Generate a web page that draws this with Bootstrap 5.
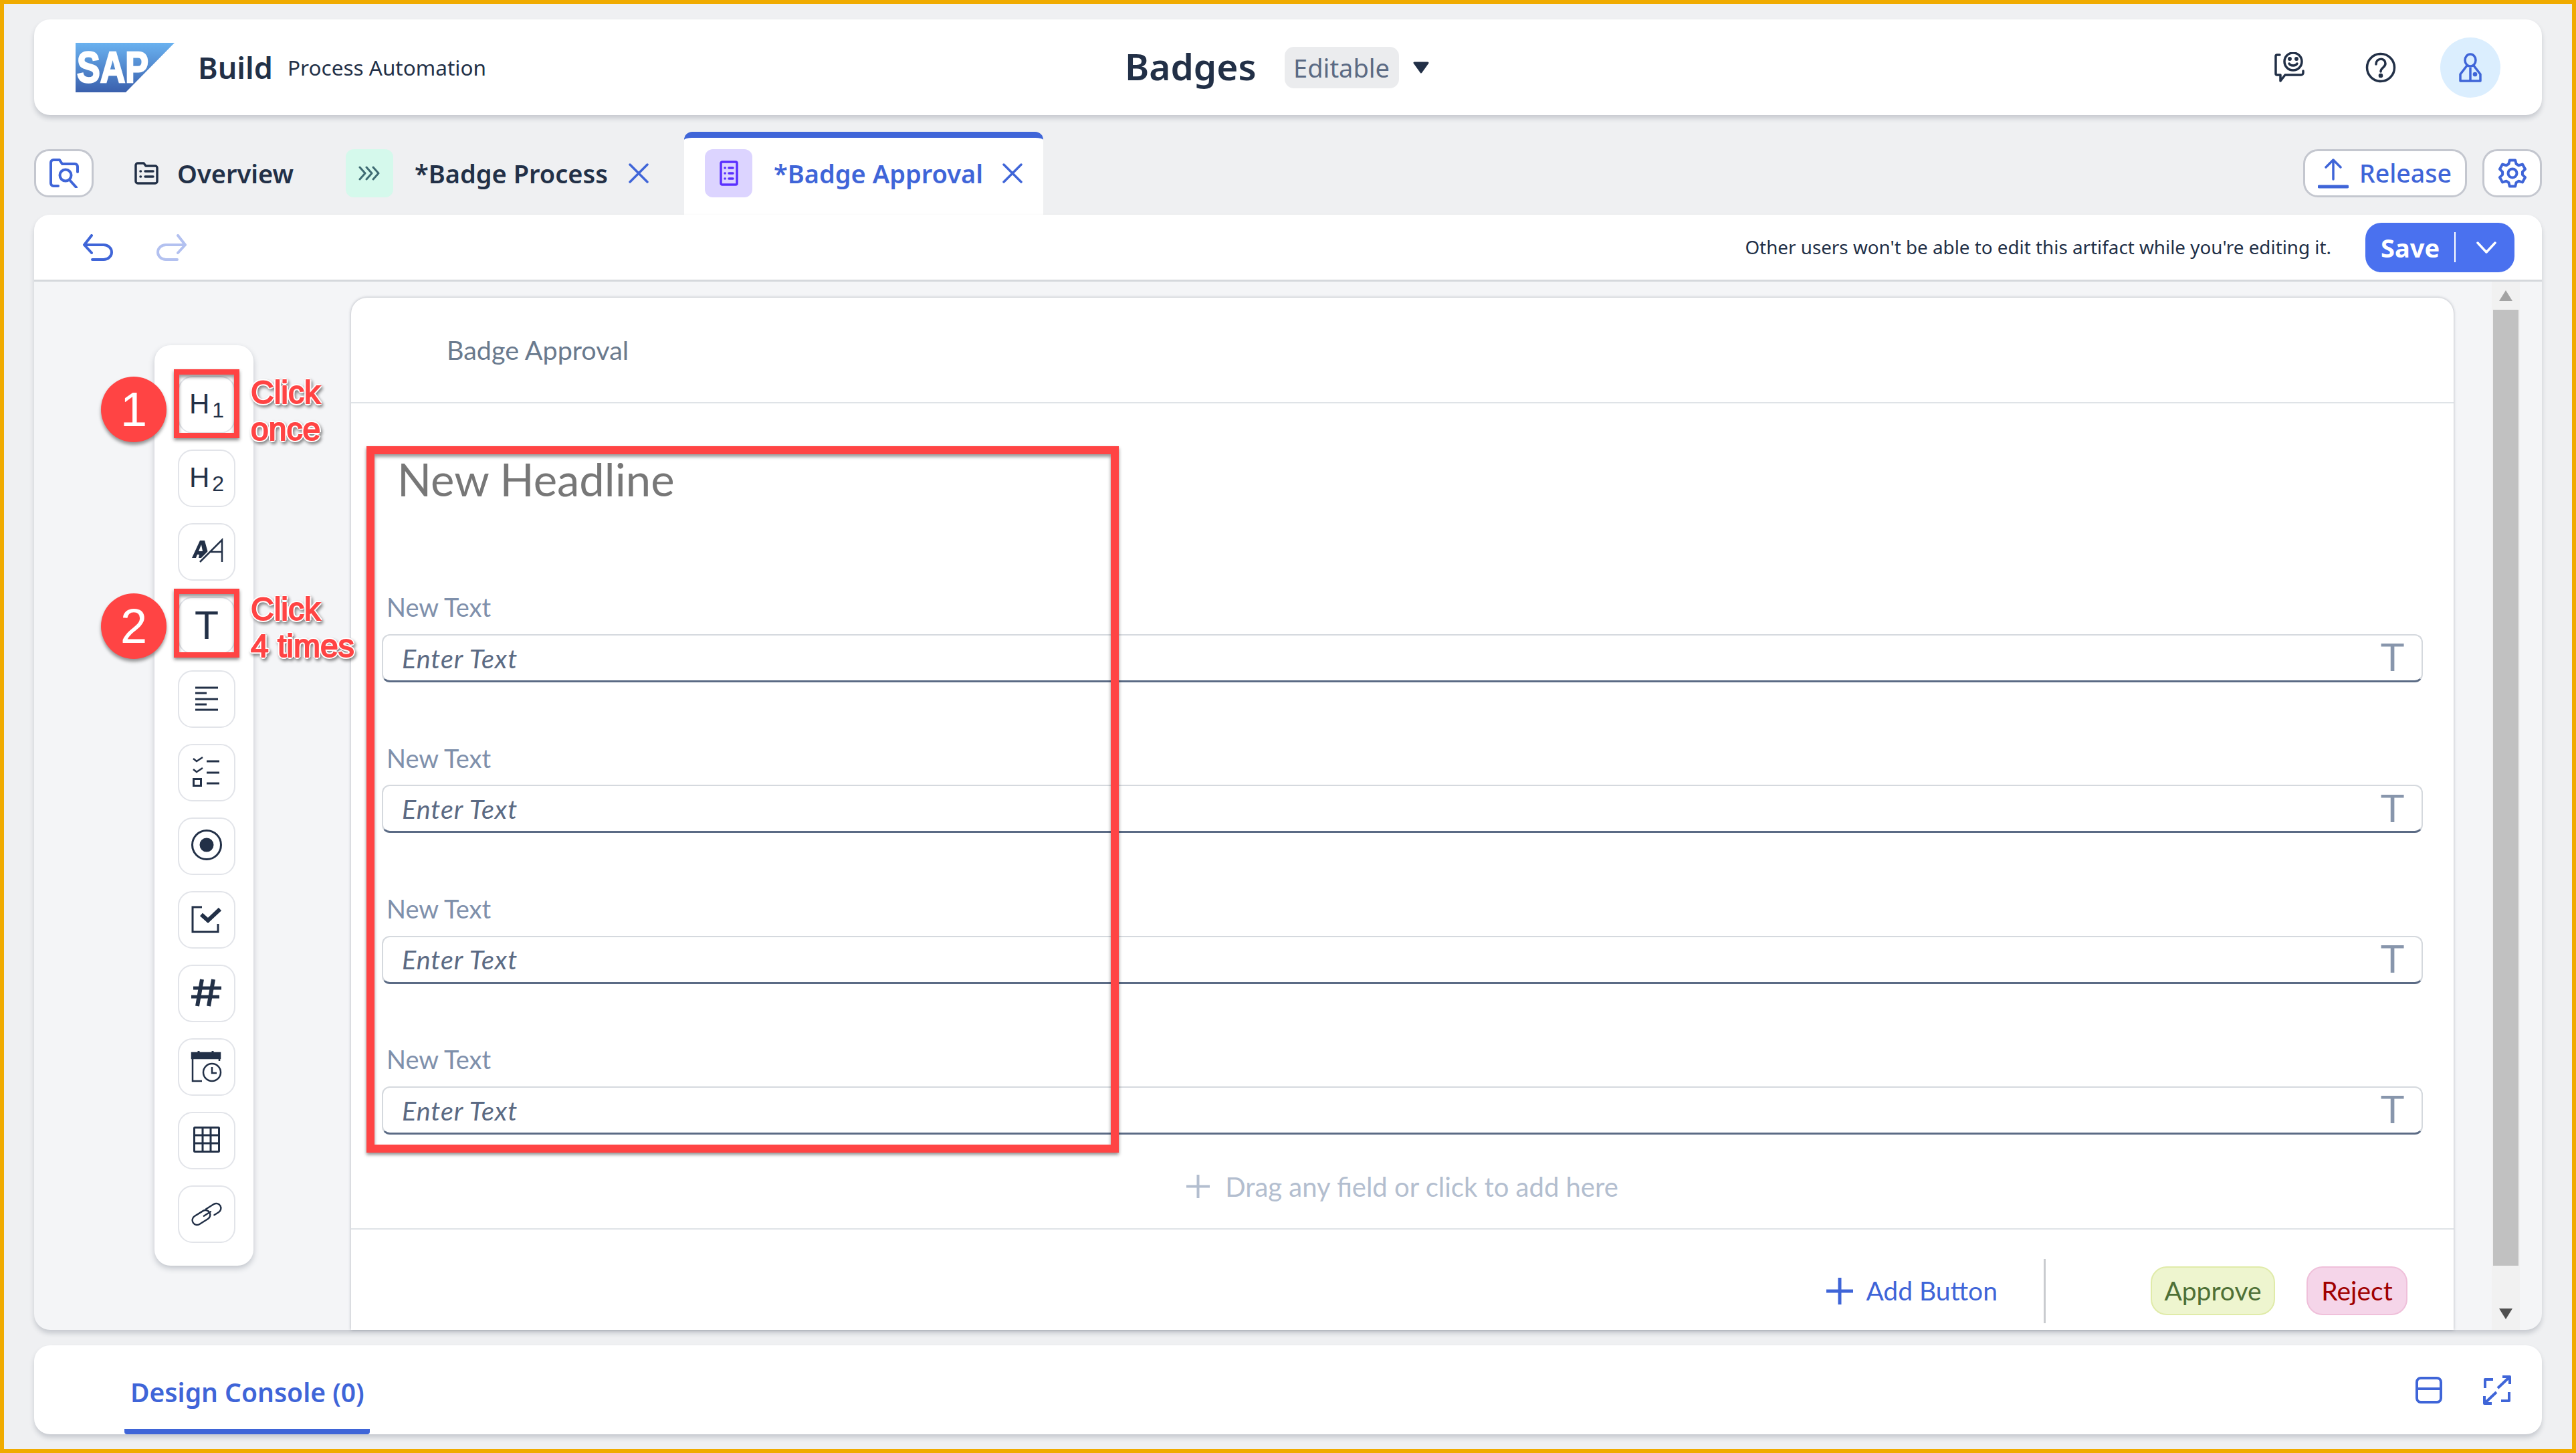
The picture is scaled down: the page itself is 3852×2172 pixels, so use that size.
<!DOCTYPE html>
<html lang="en">
<head>
  <meta charset="UTF-8" />
  <title>Badges - Process Automation</title>
  <link href="https://cdn.jsdelivr.net/npm/bootstrap@5.3.3/dist/css/bootstrap.min.css" rel="stylesheet" />
  <style>
    html, body { margin: 0; height: 100%; overflow: hidden; }
    body { font-family: "Noto Sans", sans-serif; color: #223047; background: #eff0f2; }
    svg { display: block; flex: none; }
    .app-frame { position: relative; width: 3852px; height: 2172px; border: 6px solid #f0ab00; background: #eff0f2; padding: 23px 45px 0; }

    /* header */
    .top-bar { height: 143px; background: #fff; border-radius: 24px; box-shadow: 0 5px 7px rgba(40,50,70,.2); flex: none; }
    .brand-zone { width: 1631px; padding-left: 62px; }
    .brand-build { font-size: 45px; font-weight: 600; margin-left: 35px; line-height: 1; }
    .brand-sub { font-size: 31.500px; margin-left: 22px; line-height: 1; }
    .page-title { font-size: 55px; font-weight: 600; line-height: 1; margin-top: -4px; }
    .state-chip { background: #ebecee; color: #5b6a83; font-size: 38px; line-height: 1; border-radius: 14px; height: 62px; width: 171px; margin-left: 42px; }
    .state-caret { margin-left: 21px; }
    .head-icons { margin-left: auto; padding-right: 62px; }
    .help-icon { margin-left: 90px; }
    .avatar-dot { width: 90px; height: 90px; border-radius: 50%; background: #dbeefe; margin-left: 66px; }

    /* tabs */
    .tab-row { height: 124px; margin-top: 25px; flex: none; }
    .tool-btn { height: 72px; background: #fff; border: 3px solid #c4c7cf; border-radius: 22px; color: #3f65d8; margin-top: 26px; }
    .finder-btn { width: 89px; }
    .doc-tab { height: 124px; padding-top: 26px; font-size: 38px; font-weight: 600; }
    .doc-tab-inner { height: 72px; }
    .tab-overview { margin-left: 61px; width: 316px; }
    .tab-overview .tab-label { margin-left: 28px; }
    .tab-process { width: 506px; }
    .tab-approval { width: 537px; padding-left: 31px; background: #fff; border-top: 9px solid #3f65d8; border-radius: 12px 12px 0 0; padding-top: 17px; color: #3f65d8; }
    .tab-chip { width: 71px; height: 72px; border-radius: 12px; }
    .chip-teal { background: #d5f9ec; }
    .chip-violet { background: #dcd4ff; }
    .tab-label { margin-left: 32px; line-height: 1; white-space: nowrap; }
    .tab-close { margin-left: auto; }
    .tab-process .tab-close { margin-right: 53px; }
    .tab-approval .tab-close { margin-right: 31px; }
    .release-btn { width: 245px; margin-left: auto; font-size: 37.500px; font-weight: 500; }
    .release-icon { margin-left: 19px; }
    .release-text { margin-left: 16px; line-height: 1; }
    .gear-btn { width: 89px; margin-left: 23px; }

    /* work panel */
    .work-panel { height: 1667px; border-radius: 24px; background: #f4f5f7; box-shadow: 0 5px 7px rgba(40,50,70,.2); flex: none; }
    .tool-strip { height: 100px; background: #fff; border-bottom: 3px solid #d5d8dc; border-radius: 24px 24px 0 0; padding: 0 41px 0 73px; flex: none; }
    .redo-icon { margin-left: 63px; }
    .lock-note { margin-left: auto; font-size: 27.800px; line-height: 1; }
    .save-btn { width: 223px; height: 74px; border-radius: 24px; background: #4a71ef; color: #fff; font-size: 38px; font-weight: 700; margin-left: 51px; padding-left: 23px; }
    .save-sep { width: 2px; height: 45px; background: #fff; margin-left: 22px; }
    .save-chev { margin-left: 31px; }
    .work-body { flex: 1; min-height: 0; }

    .field-palette { width: 148px; height: 1376px; margin: 95px 0 0 180px; background: #fff; border-radius: 24px; box-shadow: 0 4px 8px rgba(40,50,70,.25); padding: 46px 0 0 35px; flex: none; gap: 24px; }
    .palette-btn { width: 86px; height: 86px; border: 2.5px solid #e2e4e9; border-radius: 22px; background: #fff; color: #223047; font-family: "Liberation Sans", sans-serif; line-height: 1; flex: none; }
    .palette-btn svg { margin: -2.5px; }
    .glyph-h { font-size: 42px; margin-top: -3px; }
    .glyph-h sub { font-size: 32px; bottom: -.2em; margin-left: 4px; }
    .glyph-t { font-size: 59px; }

    .form-sheet { width: 3144px; margin: 24px 0 0 146px; background: #fff; border-radius: 24px 24px 0 0; box-shadow: 0 0 4px rgba(40,50,70,.35); flex: none; font-family: Lato, sans-serif; }
    .sheet-title { height: 158px; padding-left: 143px; font-size: 39.500px; color: #6a7a8e; border-bottom: 2.5px solid #dfe3e7; flex: none; }
    .sheet-fields { padding: 74.500px 46px 0 46px; flex: none; }
    .new-headline { font-size: 67px; line-height: 76px; color: #777; margin-left: 23px; margin-bottom: 131.800px; }
    .entry-field { margin-bottom: 90.600px; }
    .entry-field:last-child { margin-bottom: 0; }
    .entry-label { font-size: 38px; line-height: 44px; color: #7f90ab; margin: 0 0 18.700px 7px; }
    .entry-box { height: 72px; border: 2.5px solid #d5d9de; border-bottom: 3.5px solid #5b6b85; border-radius: 12px; padding: 0 25px 0 28px; }
    .entry-hint { font-size: 39.500px; letter-spacing: 1px; font-style: italic; color: #5b6a83; line-height: 1; }
    .entry-type { margin-left: auto; font-family: "Liberation Sans", sans-serif; font-size: 60px; line-height: 1; color: #8896ac; }
    .drop-hint { height: 140px; padding-top: 16px; font-size: 40px; color: #b3becf; flex: none; }
    .drop-hint svg { margin-right: 23px; }
    .sheet-actions { flex: 1; min-height: 0; border-top: 2.5px solid #dfe3e7; padding: 34px 69px 0 0; font-size: 39px; }
    .add-action { color: #3f65d8; line-height: 1; }
    .add-action svg { margin-right: 19px; }
    .action-sep { width: 3px; height: 96px; background: #c9cbcf; margin: 0 157px 0 69px; }
    .outcome-chip { height: 73px; border-radius: 24px; line-height: 1; }
    .chip-approve { width: 186px; background: #eef5cf; border: 2.5px solid #e0eba9; color: #4e7036; }
    .chip-reject { width: 151px; background: #f5d5e9; border: 2.5px solid #efc0da; color: #a00000; margin-left: 47px; }

    .scroll-rail { width: 42px; margin: 0 0 0 57px; background: #f1f1f1; flex: none; padding: 0 2px; }
    .scroll-up { height: 42px; }
    .scroll-thumb { flex: 1; background: #c1c1c1; }
    .scroll-down { height: 96px; }

    /* console */
    .console-bar { height: 133px; margin-top: 23px; background: #fff; border-radius: 24px; box-shadow: 0 5px 7px rgba(40,50,70,.2); padding-right: 44px; flex: none; }
    .console-tab { position: relative; height: 133px; margin-left: 135px; width: 367px; font-size: 39px; font-weight: 600; color: #3f65d8; padding: 50px 0 0 9px; line-height: 1; border-bottom: 8px solid #3f65d8; border-radius: 0 0 4px 4px; white-space: nowrap; }
    .console-icons { margin-left: auto; gap: 59px; }

    /* tutorial marks on top of the screenshot */
    .mark-box { position: absolute; border: 12px solid #ff4444; box-shadow: 0 3px 5px rgba(0,0,0,.45), inset 0 4px 5px rgba(0,0,0,.4); pointer-events: none; }
    .mark-box.tight { left: 254px; width: 98px; height: 103px; border-width: 8px; }
    .mark-wide { left: 542px; top: 661px; width: 1125px; height: 1056px; }
    .mark-step { position: absolute; left: 145px; width: 98px; height: 98px; border-radius: 50%; background: #ff4444; color: #fff; font-family: "Liberation Sans", sans-serif; font-size: 72px; line-height: 1; box-shadow: 0 4px 5px rgba(0,0,0,.4); }
    .mark-note { position: absolute; left: 369px; font-family: "Liberation Sans", sans-serif; font-size: 48px; line-height: 55px; color: #ff4444; -webkit-text-stroke: 2px #ff4444; text-shadow: -3px 0 0 #fff, 3px 0 0 #fff, 0 -3px 0 #fff, 0 3px 0 #fff, -2px -2px 0 #fff, 2px -2px 0 #fff, -2px 2px 0 #fff, 2px 2px 0 #fff; filter: drop-shadow(2px 3px 2px rgba(0,0,0,.45)); white-space: nowrap; }
  </style>
</head>
<body>
  <div class="app-frame d-flex flex-column">

    <!-- header -->
    <header class="top-bar d-flex align-items-center">
      <div class="brand-zone d-flex align-items-center">
        <svg width="148" height="74" viewBox="0 0 148 74">
          <defs><linearGradient id="sapFill" x1="0" y1="0" x2="0" y2="1"><stop offset="0" stop-color="#6ab2f0" /><stop offset="1" stop-color="#3a60ad" /></linearGradient></defs>
          <polygon points="0,0 148,0 75,74 0,74" fill="url(#sapFill)" />
          <text x="2" y="59" font-family="Liberation Sans" font-weight="700" font-size="64" fill="#fff" stroke="#fff" stroke-width="2.500" textLength="107" lengthAdjust="spacingAndGlyphs">SAP</text>
        </svg>
        <span class="brand-build">Build</span>
        <span class="brand-sub">Process Automation</span>
      </div>
      <div class="d-flex align-items-center">
        <span class="page-title">Badges</span>
        <span class="state-chip d-flex align-items-center justify-content-center">Editable</span>
        <svg class="state-caret" width="24" height="18" viewBox="0 0 24 18"><path d="M2 2h20L12 16z" fill="#223047" stroke="#223047" stroke-width="3" stroke-linejoin="round" /></svg>
      </div>
      <div class="head-icons d-flex align-items-center">
        <svg width="46" height="46" viewBox="0 0 46 46" fill="none" stroke="#223047" stroke-width="3.500" stroke-linecap="round" stroke-linejoin="round">
          <path d="M8 4H4a2 2 0 0 0-2 2v26a2 2 0 0 0 2 2h5v9l7-9h24a3 3 0 0 0 3-3v-3" />
          <circle cx="28" cy="14" r="13" />
          <circle cx="23" cy="10" r="1.200" fill="#223047" /><circle cx="33" cy="10" r="1.200" fill="#223047" />
          <path d="M22 17c2 4 10 4 12 0" />
        </svg>
        <svg class="help-icon" width="46" height="46" viewBox="0 0 46 46" fill="none" stroke="#223047" stroke-width="3.500" stroke-linecap="round">
          <circle cx="23" cy="23" r="20.500" />
          <path d="M16 18c0-10 14-10 14-1 0 6-7 6-7 12" />
          <circle cx="23" cy="35" r="1.600" fill="#223047" />
        </svg>
        <div class="avatar-dot d-flex align-items-center justify-content-center">
          <svg width="36" height="44" viewBox="0 0 36 44" fill="none" stroke="#3f65d8" stroke-width="3.500" stroke-linejoin="round">
            <ellipse cx="18" cy="11" rx="8" ry="9" />
            <path d="M13 19 3 32v10h30V32L23 19" />
            <path d="M18 22v20" />
            <circle cx="25" cy="32" r="1.600" fill="#3f65d8" />
          </svg>
        </div>
      </div>
    </header>

    <!-- tabs -->
    <div class="tab-row d-flex align-items-start">
      <button class="tool-btn finder-btn d-flex align-items-center justify-content-center p-0" type="button">
        <svg width="44" height="44" viewBox="0 0 44 44" fill="none" stroke="#3f65d8" stroke-width="4" stroke-linecap="round" stroke-linejoin="round">
          <path d="M13 41H6a4 4 0 0 1-4-4V6a4 4 0 0 1 4-4h9l4 6h19a4 4 0 0 1 4 4v8" />
          <circle cx="24" cy="25" r="8.500" />
          <path d="M30 32l10 11" />
        </svg>
      </button>
      <div class="doc-tab tab-overview">
        <div class="doc-tab-inner d-flex align-items-center">
          <svg width="36" height="34" viewBox="0 0 36 34" fill="none" stroke="#223047" stroke-width="3.500" stroke-linecap="round" stroke-linejoin="round">
            <path d="M2 5a3 3 0 0 1 3-3h9l3 4h14a3 3 0 0 1 3 3v20a3 3 0 0 1-3 3H5a3 3 0 0 1-3-3z" />
            <path d="M9 14h.5M9 22h.5M16 14h12M16 22h12" />
          </svg>
          <span class="tab-label">Overview</span>
        </div>
      </div>
      <div class="doc-tab tab-process">
        <div class="doc-tab-inner d-flex align-items-center">
          <span class="tab-chip chip-teal d-flex align-items-center justify-content-center">
            <svg width="34" height="22" viewBox="0 0 34 22" fill="none" stroke="#3f6b73" stroke-width="3" stroke-linecap="round" stroke-linejoin="round"><path d="M2 2l8 9-8 9M12 2l8 9-8 9M22 2l8 9-8 9" /></svg>
          </span>
          <span class="tab-label">*Badge Process</span>
          <svg class="tab-close" width="30" height="30" viewBox="0 0 30 30" fill="none" stroke="#3f65d8" stroke-width="3.500" stroke-linecap="round"><path d="M2 2l26 26M28 2L2 28" /></svg>
        </div>
      </div>
      <div class="doc-tab tab-approval">
        <div class="doc-tab-inner d-flex align-items-center">
          <span class="tab-chip chip-violet d-flex align-items-center justify-content-center">
            <svg width="28" height="38" viewBox="0 0 28 38" fill="none" stroke="#5a30ff" stroke-width="3.500" stroke-linejoin="round" stroke-linecap="round">
              <rect x="2" y="2" width="24" height="34" rx="2" />
              <path d="M8 11h.2M8 19h.2M8 27h.2M14 11h6M14 19h6M14 27h6" />
            </svg>
          </span>
          <span class="tab-label">*Badge Approval</span>
          <svg class="tab-close" width="30" height="30" viewBox="0 0 30 30" fill="none" stroke="#3f65d8" stroke-width="3.500" stroke-linecap="round"><path d="M2 2l26 26M28 2L2 28" /></svg>
        </div>
      </div>
      <button class="tool-btn release-btn d-flex align-items-center p-0" type="button">
        <svg class="release-icon" width="46" height="46" viewBox="0 0 46 46" fill="none" stroke="#3f65d8" stroke-linecap="round" stroke-linejoin="round">
          <path d="M23 32V3M12 14 23 3l11 11" stroke-width="3.500" />
          <path d="M2 43h42" stroke-width="5" />
        </svg>
        <span class="release-text">Release</span>
      </button>
      <button class="tool-btn gear-btn d-flex align-items-center justify-content-center p-0" type="button">
        <svg width="44" height="44" viewBox="0 0 44 44" fill="none" stroke="#3f65d8" stroke-width="4" stroke-linejoin="round">
          <path d="M16.400 8.100 17.800 2.400H26.200L27.600 8.100 31.200 10.200 36.900 8.600 41 15.800 36.900 19.900V24.100L41 28.200 36.900 35.400 31.200 33.800 27.600 35.900 26.200 41.600H17.800L16.400 35.900 12.800 33.800 7.100 35.400 3 28.200 7.100 24.100V19.900L3 15.800 7.100 8.600 12.800 10.200z" />
          <circle cx="22" cy="22" r="6.500" />
        </svg>
      </button>
    </div>

    <!-- work panel -->
    <div class="work-panel d-flex flex-column">
      <div class="tool-strip d-flex align-items-center">
        <svg width="46" height="40" viewBox="0 0 46 40" fill="none" stroke="#3f65d8" stroke-width="4" stroke-linecap="round" stroke-linejoin="round"><path d="M13 2 2 16l11 12M3 16h28a12 11 0 0 1 0 22H14" /></svg>
        <svg class="redo-icon" width="46" height="40" viewBox="0 0 46 40" fill="none" stroke="#b3c1f0" stroke-width="4" stroke-linecap="round" stroke-linejoin="round"><path d="M33 2l11 14-11 12M43 16H15a12 11 0 0 0 0 22h17" /></svg>
        <span class="lock-note">Other users won't be able to edit this artifact while you're editing it.</span>
        <button class="save-btn d-flex align-items-center border-0" type="button">
          <span class="lh-1">Save</span>
          <span class="save-sep"></span>
          <svg class="save-chev" width="30" height="18" viewBox="0 0 30 18" fill="none" stroke="#fff" stroke-width="3.500" stroke-linecap="round" stroke-linejoin="round"><path d="M2 2l13 14L28 2" /></svg>
        </button>
      </div>

      <div class="work-body d-flex">
        <!-- field palette -->
        <div class="field-palette d-flex flex-column">
          <div class="palette-btn d-flex align-items-center justify-content-center"><span class="glyph-h">H<sub>1</sub></span></div>
          <div class="palette-btn d-flex align-items-center justify-content-center"><span class="glyph-h">H<sub>2</sub></span></div>
          <div class="palette-btn">
            <svg width="86" height="86" viewBox="0 0 86 86" fill="none" stroke="#223047">
              <path d="M21 52 33 26h7l5 18-8 8h-6l1-5h-3l-2 5zM35 32l-4 10h6z" fill="#223047" stroke="none" fill-rule="evenodd" />
              <path d="M31 60 66 25" stroke="#fff" stroke-width="6" />
              <path d="M33 58 66 25v33M48 43h18" stroke-width="2.500" />
            </svg>
          </div>
          <div class="palette-btn d-flex align-items-center justify-content-center"><span class="glyph-t">T</span></div>
          <div class="palette-btn">
            <svg width="86" height="86" viewBox="0 0 86 86" stroke="#223047" stroke-width="3"><path d="M26 26h34M26 34h17M26 43h34M26 51h17M26 59h34" /></svg>
          </div>
          <div class="palette-btn">
            <svg width="86" height="86" viewBox="0 0 86 86" fill="none" stroke="#223047" stroke-width="2.500"><path d="M23 22l5 4 9-6M23 38l5 4 9-6" /><rect x="23.500" y="52.500" width="11" height="10" stroke-width="3" /><path d="M43 26h19M43 43h19M43 59h19" stroke-width="3" /></svg>
          </div>
          <div class="palette-btn">
            <svg width="86" height="86" viewBox="0 0 86 86" fill="none" stroke="#223047" stroke-width="3"><circle cx="43" cy="41" r="21.500" /><circle cx="43" cy="41" r="9" fill="#223047" /></svg>
          </div>
          <div class="palette-btn">
            <svg width="86" height="86" viewBox="0 0 86 86" fill="none" stroke="#223047"><path d="M36 24H22v37h38V49" stroke-width="3" /><path d="M35 35l10 9 18-17" stroke-width="6" /></svg>
          </div>
          <div class="palette-btn">
            <svg width="86" height="86" viewBox="0 0 86 86" fill="none" stroke="#223047"><path d="M36 22l-7 40M53 22l-7 40" stroke-width="6" /><path d="M23 35h42M20 48h42" stroke-width="5" /></svg>
          </div>
          <div class="palette-btn">
            <svg width="86" height="86" viewBox="0 0 86 86" fill="none" stroke="#223047" stroke-width="2.500">
              <path d="M36 64H22V25h40v9" /><path d="M21 22h42v8H21z" fill="#223047" /><path d="M31 19v5M52 19v5" stroke-width="3" />
              <circle cx="51" cy="51" r="13" /><path d="M51 43v9h7" />
            </svg>
          </div>
          <div class="palette-btn">
            <svg width="86" height="86" viewBox="0 0 86 86" fill="none" stroke="#223047" stroke-width="3"><rect x="24.500" y="23.500" width="37" height="36" rx="1" /><path d="M37 24v35M49 24v35M25 35h36M25 47h36" /></svg>
          </div>
          <div class="palette-btn">
            <svg width="86" height="86" viewBox="0 0 86 86" fill="none" stroke="#223047" stroke-width="2.400" stroke-linecap="round"><g transform="rotate(-32 43 43)"><rect x="19" y="36" width="29" height="14" rx="7" /><path d="M46 36h14a7 7 0 0 1 0 14H52" /><path d="M38 43h12" /></g></svg>
          </div>
        </div>

        <!-- form sheet -->
        <div class="form-sheet d-flex flex-column">
          <div class="sheet-title d-flex align-items-center">Badge Approval</div>
          <div class="sheet-fields">
            <div class="new-headline">New Headline</div>
            <div class="entry-field">
              <div class="entry-label">New Text</div>
              <div class="entry-box d-flex align-items-center"><span class="entry-hint">Enter Text</span><span class="entry-type">T</span></div>
            </div>
            <div class="entry-field">
              <div class="entry-label">New Text</div>
              <div class="entry-box d-flex align-items-center"><span class="entry-hint">Enter Text</span><span class="entry-type">T</span></div>
            </div>
            <div class="entry-field">
              <div class="entry-label">New Text</div>
              <div class="entry-box d-flex align-items-center"><span class="entry-hint">Enter Text</span><span class="entry-type">T</span></div>
            </div>
            <div class="entry-field">
              <div class="entry-label">New Text</div>
              <div class="entry-box d-flex align-items-center"><span class="entry-hint">Enter Text</span><span class="entry-type">T</span></div>
            </div>
          </div>
          <div class="drop-hint d-flex align-items-center justify-content-center">
            <svg width="35" height="35" viewBox="0 0 35 35" stroke="#b3becf" stroke-width="4"><path d="M17.500 0v35M0 17.500h35" /></svg>
            <span class="lh-1">Drag any field or click to add here</span>
          </div>
          <div class="sheet-actions d-flex align-items-center justify-content-end">
            <span class="add-action d-flex align-items-center">
              <svg width="40" height="40" viewBox="0 0 40 40" stroke="#3f65d8" stroke-width="5"><path d="M20 0v40M0 20h40" /></svg>
              Add Button
            </span>
            <span class="action-sep"></span>
            <span class="outcome-chip chip-approve d-flex align-items-center justify-content-center">Approve</span>
            <span class="outcome-chip chip-reject d-flex align-items-center justify-content-center">Reject</span>
          </div>
        </div>

        <div class="scroll-rail d-flex flex-column">
          <div class="scroll-up d-flex align-items-center justify-content-center"><svg width="20" height="16" viewBox="0 0 20 16"><path d="M10 0l10 16H0z" fill="#a3a3a3" /></svg></div>
          <div class="scroll-thumb"></div>
          <div class="scroll-down d-flex align-items-end justify-content-center pb-3"><svg width="20" height="16" viewBox="0 0 20 16"><path d="M0 0h20L10 16z" fill="#505050" /></svg></div>
        </div>
      </div>
    </div>

    <!-- console -->
    <div class="console-bar d-flex align-items-center">
      <div class="console-tab">Design Console (0)</div>
      <div class="console-icons d-flex align-items-center">
        <svg width="40" height="40" viewBox="0 0 40 40" fill="none" stroke="#3f65d8" stroke-width="4"><rect x="2" y="2" width="36" height="36" rx="6" /><path d="M2 18h36" /></svg>
        <svg width="46" height="46" viewBox="0 0 46 46" fill="none" stroke="#3f65d8" stroke-width="4" stroke-linejoin="round"><path d="M17 7H5v13M29 39h12V26" /><path d="M24 20 42 3M31 3h11v11M22 26 4 43M15 43H4V32" /></svg>
      </div>
    </div>

    <!-- tutorial marks -->
    <div class="mark-box tight" style="top:546px"></div>
    <div class="mark-box tight" style="top:874px"></div>
    <div class="mark-box mark-wide"></div>
    <div class="mark-step d-flex align-items-center justify-content-center" style="top:557px">1</div>
    <div class="mark-step d-flex align-items-center justify-content-center" style="top:881px">2</div>
    <div class="mark-note" style="top:553px">Click<br />once</div>
    <div class="mark-note" style="top:877px">Click<br />4 times</div>
  </div>
</body>
</html>
